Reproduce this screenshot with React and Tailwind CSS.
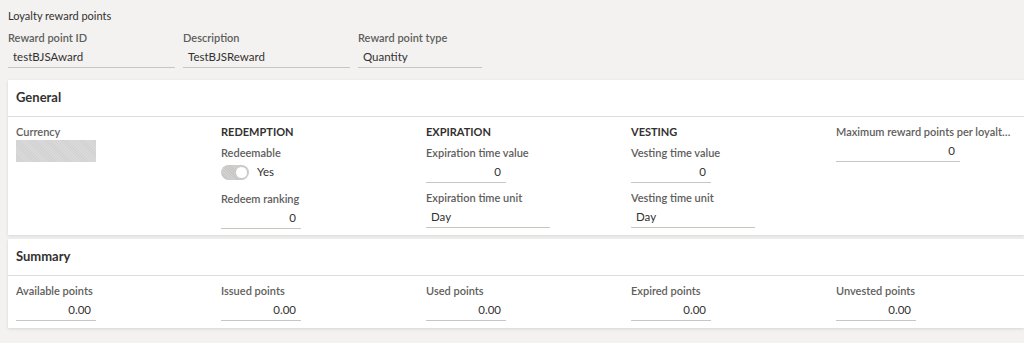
import React from 'react';

const font = "font-['Lato','Open_Sans',sans-serif]";

function Label({ children }) {
  return (
    <div className="h-4 text-[11px] leading-4 font-semibold text-[#605e5c] whitespace-nowrap overflow-hidden text-ellipsis">
      {children}
    </div>
  );
}

function Field({ label, value, width = 'w-[80px]', align = 'left', className = '' }) {
  return (
    <div className={className}>
      <Label>{label}</Label>
      <div
        className={`${width} h-[22px] border-b border-[#c8c6c4] text-[11.5px] leading-[21px] text-[#323130] px-[5px] ${
          align === 'right' ? 'text-right' : 'text-left'
        }`}
      >
        {value}
      </div>
    </div>
  );
}

function Heading({ children }) {
  return <div className="h-4 text-[11px] leading-4 font-bold text-[#323130]">{children}</div>;
}

function Card({ title, children, className = '' }) {
  return (
    <div className={`ml-2 bg-white shadow-[0_1px_3px_rgba(0,0,0,0.12)] ${className}`}>
      <div className="h-[37px] px-2 flex items-center border-b border-[#dcdcdc] text-[13px] font-bold text-[#323130]">
        {title}
      </div>
      {children}
    </div>
  );
}

export default function App() {
  return (
    <div className={`min-h-screen w-[1024px] bg-[#f3f2f1] ${font} overflow-hidden`}>
      {/* Header fields */}
      <div className="pl-2 pt-2">
        <div className="h-[15px] text-[11px] leading-[15px] text-[#323130]">Loyalty reward points</div>
        <div className="mt-[7px] flex gap-2">
          <Field label="Reward point ID" value="testBJSAward" width="w-[167px]" />
          <Field label="Description" value="TestBJSReward" width="w-[167px]" />
          <Field label="Reward point type" value="Quantity" width="w-[124px]" />
        </div>
      </div>

      {/* General */}
      <Card title="General" className="mt-3">
        <div className="px-2 pt-[7px] pb-[6px] grid grid-cols-[205px_205px_205px_205px_180px]">
          <div>
            <Label>Currency</Label>
            <div className="w-[80px] h-[22px] bg-[#d6d6d6] bg-[repeating-linear-gradient(45deg,#d2d2d2_0px,#d2d2d2_1px,#dadada_1px,#dadada_2px)]" />
          </div>

          <div>
            <Heading>REDEMPTION</Heading>
            <div className="mt-[5px]">
              <Label>Redeemable</Label>
              <div className="h-[22px] flex items-center gap-2">
                <div className="w-[28px] h-[15px] rounded-full bg-[#cfcdcb] bg-[repeating-linear-gradient(45deg,#c8c6c4_0px,#c8c6c4_1px,#d4d2d0_1px,#d4d2d0_2px)] flex items-center justify-end pr-[2px]">
                  <div className="w-[11px] h-[11px] rounded-full bg-white" />
                </div>
                <span className="text-[11.5px] text-[#323130]">Yes</span>
              </div>
            </div>
            <Field className="mt-[8px]" label="Redeem ranking" value="0" align="right" />
          </div>

          <div>
            <Heading>EXPIRATION</Heading>
            <Field className="mt-[5px]" label="Expiration time value" value="0" align="right" />
            <Field className="mt-[7px]" label="Expiration time unit" value="Day" width="w-[124px]" />
          </div>

          <div>
            <Heading>VESTING</Heading>
            <Field className="mt-[5px]" label="Vesting time value" value="0" align="right" />
            <Field className="mt-[7px]" label="Vesting time unit" value="Day" width="w-[124px]" />
          </div>

          <div className="w-[178px]">
            <Field label="Maximum reward points per loyalty card" value="0" width="w-[124px]" align="right" />
          </div>
        </div>
      </Card>

      {/* Summary */}
      <Card title="Summary" className="mt-1">
        <div className="px-2 pt-[7px] pb-[7px] grid grid-cols-[205px_205px_205px_205px_180px]">
          <Field label="Available points" value="0.00" align="right" />
          <Field label="Issued points" value="0.00" align="right" />
          <Field label="Used points" value="0.00" align="right" />
          <Field label="Expired points" value="0.00" align="right" />
          <Field label="Unvested points" value="0.00" align="right" />
        </div>
      </Card>
    </div>
  );
}
